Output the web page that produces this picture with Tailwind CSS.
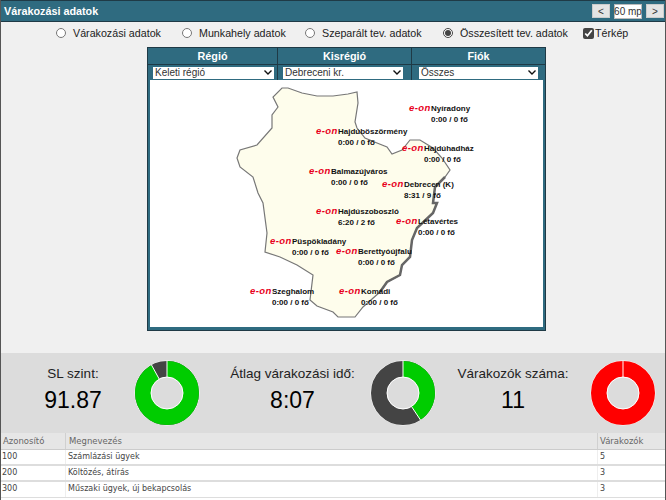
<!DOCTYPE html>
<html lang="hu">
<head>
<meta charset="utf-8">
<script src="https://cdn.jsdelivr.net/npm/@tailwindcss/browser@4"></script>
</head>
<body class="m-0">
<div class="w-[666px] h-[500px] overflow-hidden flex flex-col bg-[#f0f0f0] border-x border-[#555] font-['Liberation_Sans',Arial,sans-serif] text-black">
  <header class="h-[22px] shrink-0 bg-[#2f6b80] border-y border-[#1f3a46] flex items-center justify-between pl-[3px] pr-[1px]">
    <h1 class="text-[10.800px] font-bold text-white">Várakozási adatok</h1>
    <div class="flex items-center gap-[4px] text-[10px] text-[#333] whitespace-nowrap">
      <span class="w-[18px] h-[14px] bg-[#e4e4e4] border border-[#ccc] flex items-center justify-center">&lt;</span>
      <span class="w-[28px] h-[15px] bg-white border border-[#bbb] flex items-center justify-center">60 mp</span>
      <span class="w-[18px] h-[14px] bg-[#e4e4e4] border border-[#ccc] flex items-center justify-center">&gt;</span>
    </div>
  </header>

  <div class="h-[23px] mb-[2px] shrink-0 flex items-center text-[10.700px] text-[#222] pl-[54px]">
    <label class="flex items-center w-[126px]"><input type="radio" name="m" class="w-[10px] h-[10px] mr-[7px] ml-[1px]">Várakozási adatok</label>
    <label class="flex items-center w-[124px]"><input type="radio" name="m" class="w-[10px] h-[10px] mr-[7px] ml-[1px]">Munkahely adatok</label>
    <label class="flex items-center w-[138px]"><input type="radio" name="m" class="w-[10px] h-[10px] mr-[7px]">Szeparált tev. adatok</label>
    <label class="flex items-center w-[140px]"><input type="radio" name="m" checked class="w-[10px] h-[10px] mr-[7px] accent-[#444]">Összesített tev. adatok</label>
    <label class="flex items-center"><input type="checkbox" checked class="w-[11px] h-[11px] mr-[1px] accent-[#444]">Térkép</label>
  </div>

  <section class="ml-[146px] w-[399px] h-[284px] shrink-0 bg-[#2f6b80] border border-[#1f3a46] flex flex-col">
    <div class="grid grid-cols-[130px_134px_1fr] h-[17px] text-[10.800px] font-bold text-white text-center border-b border-[#1f3a46]">
      <div class="border-r border-[#1f3a46] leading-[16px]">Régió</div>
      <div class="border-r border-[#1f3a46] leading-[16px]">Kisrégió</div>
      <div class="leading-[16px]">Fiók</div>
    </div>
    <div class="grid grid-cols-[130px_134px_1fr] h-[15px] text-[10px] text-[#333] items-center">
      <div class="h-full border-r border-[#1f3a46] pl-[5px] flex items-center"><div class="w-[121px] h-[12px] bg-white flex items-center justify-between px-[2px]">Keleti régió<svg width="8" height="5" viewBox="0 0 8 5"><path d="M.5.5 4 4 7.500.5" fill="none" stroke="#111" stroke-width="1.400"/></svg></div></div>
      <div class="h-full border-r border-[#1f3a46] pl-[5px] flex items-center"><div class="w-[120px] h-[12px] bg-white flex items-center justify-between px-[2px]">Debreceni kr.<svg width="8" height="5" viewBox="0 0 8 5"><path d="M.5.5 4 4 7.500.5" fill="none" stroke="#111" stroke-width="1.400"/></svg></div></div>
      <div class="h-full pl-[7px] flex items-center"><div class="w-[119px] h-[12px] bg-white flex items-center justify-between px-[2px]">Összes<svg width="8" height="5" viewBox="0 0 8 5"><path d="M.5.5 4 4 7.500.5" fill="none" stroke="#111" stroke-width="1.400"/></svg></div></div>
    </div>
    <div class="relative mx-[2px] h-[247px] bg-white overflow-hidden text-[8px] font-bold text-[#111] leading-[11px] [&_i]:text-[9.500px] [&_i]:leading-[11px] [&_i]:text-[#e8001c] [&_i]:w-[21px] [&_i]:shrink-0 [&_i]:whitespace-nowrap [&_i]:font-black [&_i]:tracking-[0.4px] [&_div_div]:whitespace-nowrap [&_div_div]:pt-[1px]">
      <svg class="absolute left-[-150px] top-[-80px]" width="666" height="500" viewBox="0 0 666 500">
        <path d="M282 88 288 88 302 93 317 96 333 96 348 94 357 92 358 103 355 122 357 128 365 138 377 143 387 147 392 154 402 150 410 140 420 140 433 148 442 158 450 170 445 177 435 187 433 203 437 203 433 213 417 228 412 240 410 257 402 265 400 275 387 282 380 292 363 307 355 317 338 317 333 312 317 306 310 300 313 275 297 265 280 257 265 252 267 233 263 203 258 193 253 177 240 167 237 158 240 150 257 145 272 128 272 115 278 107 273 97Z" fill="#fefdec" stroke="#777" stroke-width="1.200"/>
        <path d="M445 177 435 187 433 203 437 203 433 213 417 228 412 240 410 257 402 265 400 275 387 282 380 292" fill="none" stroke="#666" stroke-width="2.500"/>
      </svg>
      <div class="absolute left-[259px] top-[22px] flex"><i>e-on</i><div class="ml-[1px]">Nyíradony<span class="block">0:00 / 0 fő</span></div></div>
      <div class="absolute left-[166px] top-[45px] flex"><i>e-on</i><div class="ml-[1px]">Hajdúböszörmény<span class="block">0:00 / 0 fő</span></div></div>
      <div class="absolute left-[252px] top-[62px] flex"><i>e-on</i><div class="ml-[1px]">Hajdúhadház<span class="block">0:00 / 0 fő</span></div></div>
      <div class="absolute left-[159px] top-[85px] flex"><i>e-on</i><div class="ml-[1px]">Balmazújváros<span class="block">0:00 / 0 fő</span></div></div>
      <div class="absolute left-[232px] top-[98px] flex"><i>e-on</i><div class="ml-[1px]">Debrecen (K)<span class="block">8:31 / 9 fő</span></div></div>
      <div class="absolute left-[166px] top-[125px] flex"><i>e-on</i><div class="ml-[1px]">Hajdúszoboszló<span class="block">6:20 / 2 fő</span></div></div>
      <div class="absolute left-[246px] top-[135px] flex"><i>e-on</i><div class="ml-[1px]">Létavértes<span class="block">0:00 / 0 fő</span></div></div>
      <div class="absolute left-[120px] top-[155px] flex"><i>e-on</i><div class="ml-[1px]">Püspökladány<span class="block">0:00 / 0 fő</span></div></div>
      <div class="absolute left-[186px] top-[165px] flex"><i>e-on</i><div class="ml-[1px]">Berettyóújfalu<span class="block">0:00 / 0 fő</span></div></div>
      <div class="absolute left-[100px] top-[205px] flex"><i>e-on</i><div class="ml-[1px]">Szeghalom<span class="block">0:00 / 0 fő</span></div></div>
      <div class="absolute left-[189px] top-[205px] flex"><i>e-on</i><div class="ml-[1px]">Komádi<span class="block">0:00 / 0 fő</span></div></div>
    </div>
  </section>

  <section class="mt-[22px] h-[80px] shrink-0 bg-[#dcdcdc] flex items-center pl-[11px]">
    <div class="w-[122px] text-center"><div class="text-[13.500px] text-[#222]">SL szint:</div><div class="text-[23px] leading-[32px] mb-[6px]">91.87</div></div>
    <svg class="w-[66px] h-[66px]" viewBox="0 0 66 66">
      <circle cx="33" cy="33" r="32.500" fill="#fff"/>
      <circle cx="33" cy="33" r="24" fill="none" stroke="#444" stroke-width="16"/>
      <circle cx="33" cy="33" r="24" fill="none" stroke="#00cc00" stroke-width="16" pathLength="100" stroke-dasharray="92 8" transform="rotate(-90 33 33)"/>
      <path d="M33 1V17M17.500 5 25.200 19" stroke="#fff" stroke-width="1"/>
      <circle cx="33" cy="33" r="16" fill="#dcdcdc" stroke="#fff"/>
    </svg>
    <div class="ml-[23px] w-[139px] text-center"><div class="text-[13.500px] text-[#222]">Átlag várakozási idő:</div><div class="text-[23px] leading-[32px] mb-[6px]">8:07</div></div>
    <svg class="ml-[8px] w-[66px] h-[66px]" viewBox="0 0 66 66">
      <circle cx="33" cy="33" r="32.500" fill="#fff"/>
      <circle cx="33" cy="33" r="24" fill="none" stroke="#444" stroke-width="16"/>
      <circle cx="33" cy="33" r="24" fill="none" stroke="#00cc00" stroke-width="16" pathLength="100" stroke-dasharray="41 59" transform="rotate(-90 33 33)"/>
      <path d="M33 1V17M41.500 46.500 50.500 60" stroke="#fff" stroke-width="1"/>
      <circle cx="33" cy="33" r="16" fill="#dcdcdc" stroke="#fff"/>
    </svg>
    <div class="ml-[15px] w-[124px] text-center"><div class="text-[13.500px] text-[#222]">Várakozók száma:</div><div class="text-[23px] leading-[32px] mb-[6px]">11</div></div>
    <svg class="ml-[15px] w-[66px] h-[66px]" viewBox="0 0 66 66">
      <circle cx="33" cy="33" r="32.500" fill="#fff"/>
      <circle cx="33" cy="33" r="24" fill="none" stroke="#ff0000" stroke-width="16"/>
      <path d="M33 1V17" stroke="#fff" stroke-width="1"/>
      <circle cx="33" cy="33" r="16" fill="#dcdcdc" stroke="#fff"/>
    </svg>
  </section>

  <section class="font-['DejaVu_Sans',sans-serif] text-[8px] text-[#444] bg-white flex-1">
    <div class="grid grid-cols-[65px_1fr_68px] h-[17px] bg-[#e6e6e6] text-[8.500px] text-[#666] border-b border-[#ccc] leading-[16px]">
      <div class="pl-[2px] border-r border-[#d0d0d0]">Azonosító</div><div class="pl-[3px]">Megnevezés</div><div class="pl-[2px] border-l border-[#d0d0d0]">Várakozók</div>
    </div>
    <div class="grid grid-cols-[65px_1fr_68px] h-[16px] border-b-2 border-[#ddd] leading-[14px]">
      <div class="pl-[1px] border-r border-[#eee]">100</div><div class="pl-[2px]">Számlázási ügyek</div><div class="pl-[2px] border-l border-[#eee]">5</div>
    </div>
    <div class="grid grid-cols-[65px_1fr_68px] h-[16px] border-b-2 border-[#ddd] leading-[14px]">
      <div class="pl-[1px] border-r border-[#eee]">200</div><div class="pl-[2px]">Költözés, átírás</div><div class="pl-[2px] border-l border-[#eee]">3</div>
    </div>
    <div class="grid grid-cols-[65px_1fr_68px] h-[16px] border-b border-[#ddd] leading-[14px]">
      <div class="pl-[1px] border-r border-[#eee]">300</div><div class="pl-[2px]">Műszaki ügyek, új bekapcsolás</div><div class="pl-[2px] border-l border-[#eee]">3</div>
    </div>
  </section>
</div>
</body>
</html>
